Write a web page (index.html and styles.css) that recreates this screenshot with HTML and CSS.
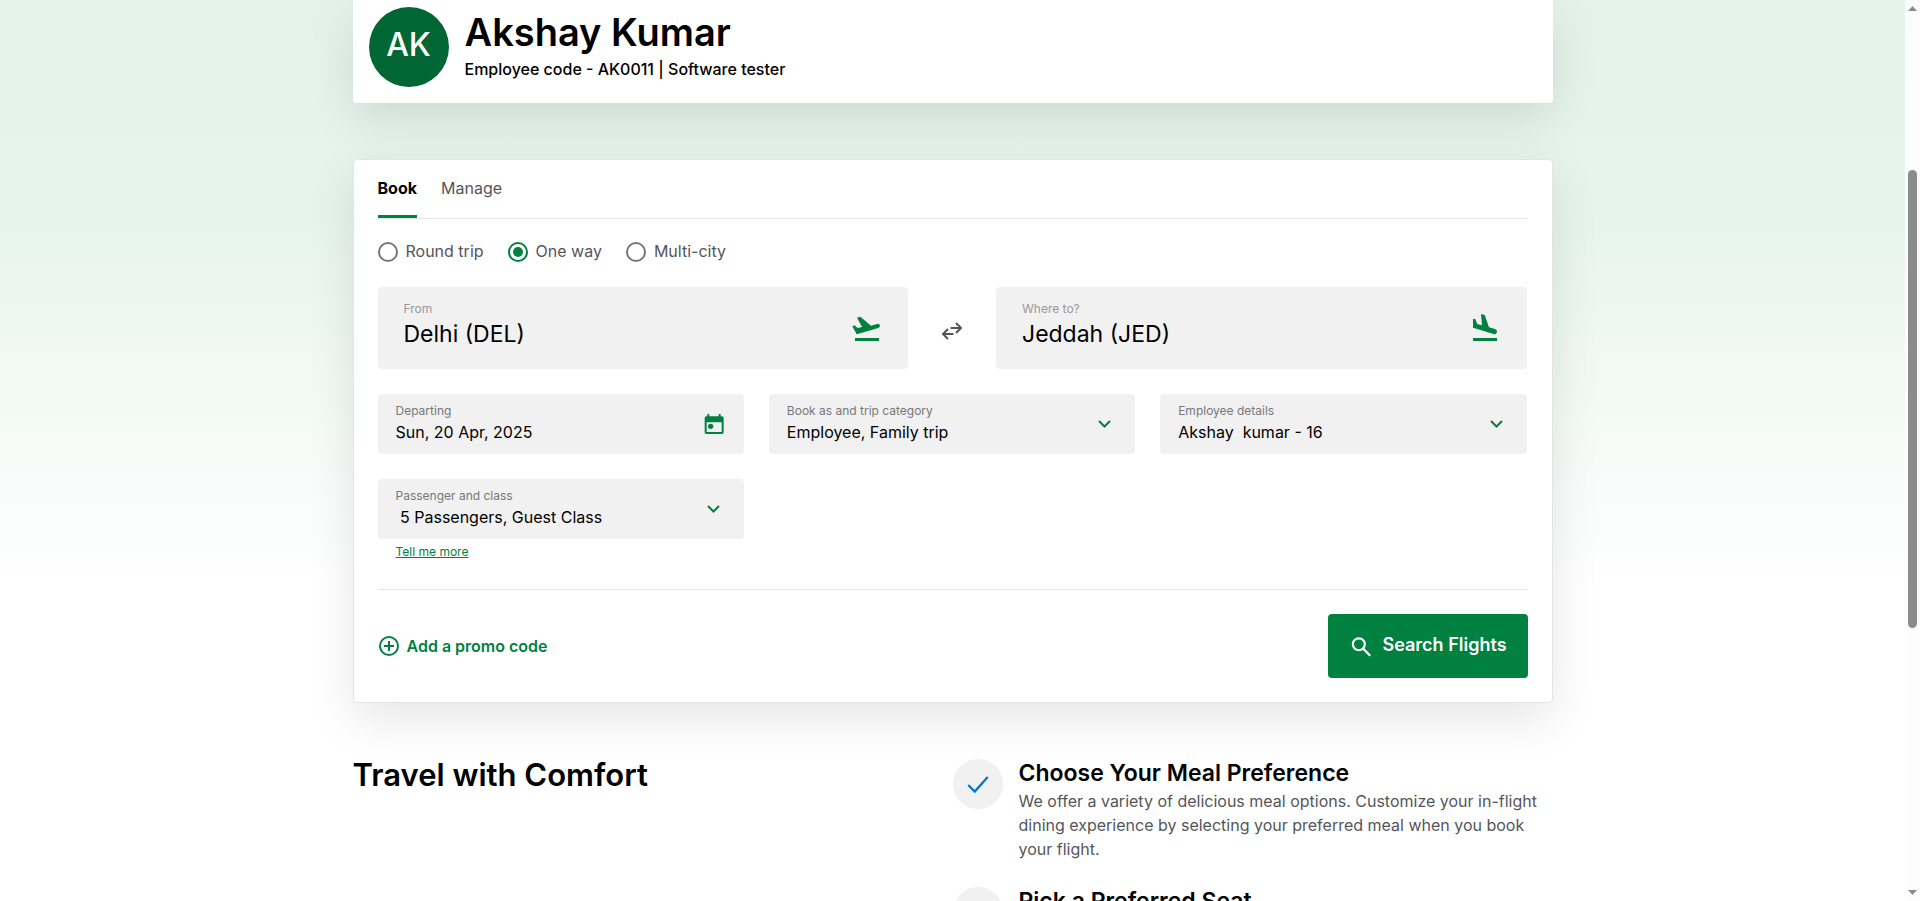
FILE: index.html
```html
<!DOCTYPE html>
<html lang="en">
<head>
<meta charset="utf-8">
<title>Book a flight</title>
<link rel="stylesheet" href="styles.css">
</head>
<body>
<div class="page">
  <main class="content">
    <header class="profile card">
      <div class="avatar">AK</div>
      <div class="profile-text">
        <h1 class="profile-name">Akshay Kumar</h1>
        <p class="profile-meta">Employee code - AK0011 | Software tester</p>
      </div>
    </header>

    <form class="booking card">
      <nav class="tabs">
        <a class="tab tab-active" href="#book">Book</a>
        <a class="tab" href="#manage">Manage</a>
      </nav>

      <div class="trip-types">
        <label class="radio"><input type="radio" name="trip">Round trip</label>
        <label class="radio"><input type="radio" name="trip" checked>One way</label>
        <label class="radio"><input type="radio" name="trip">Multi-city</label>
      </div>

      <div class="route">
        <div class="field field-large">
          <div class="field-body">
            <label for="from">From</label>
            <input id="from" type="text" value="Delhi (DEL)">
          </div>
          <svg class="icon-plane" viewBox="27 36 96 96" aria-hidden="true"><path d="M34 79l6-3 10 8 13-3-15-28 10-3 32 27 18-5q7-1 9 4 1 5-5 8L47 103zM42 114h72v9H42z"/></svg>
        </div>
        <button class="swap" type="button" aria-label="Swap origin and destination">
          <svg viewBox="0 0 24 24" aria-hidden="true"><path d="M3 15h10.500M8 10l-5 5 5 5M10.500 9H21M16 4l5 5-5 5"/></svg>
        </button>
        <div class="field field-large">
          <div class="field-body">
            <label for="to">Where to?</label>
            <input id="to" type="text" value="Jeddah (JED)">
          </div>
          <svg class="icon-plane" viewBox="27 36 96 96" aria-hidden="true"><path d="M39 56l7 2 6 14 14 4-3-34 11 3 13 37 18 5q7 3 6 9-2 7-8 7L39 83zM39 114h72v9H39z"/></svg>
        </div>
      </div>

      <div class="details">
        <div class="field">
          <div class="field-body">
            <label for="date">Departing</label>
            <input id="date" type="text" value="Sun, 20 Apr, 2025">
          </div>
          <svg class="icon-calendar" viewBox="22 24 72 72" aria-hidden="true"><path fill-rule="evenodd" d="M38 30h6v7h28v-7h6v7h4q5 0 5 5v43q0 5-5 5H35q-5 0-5-5V42q0-5 5-5h3zM36 55v29h45V55z"/><circle cx="48" cy="67" r="8"/></svg>
        </div>
        <div class="field">
          <div class="field-body">
            <label for="category">Book as and trip category</label>
            <select id="category"><option>Employee, Family trip</option></select>
          </div>
          <svg class="icon-chevron" viewBox="0 0 16 16" aria-hidden="true"><path d="M2 5l5.500 5.500L13 5"/></svg>
        </div>
        <div class="field">
          <div class="field-body">
            <label for="employee">Employee details</label>
            <select id="employee"><option>Akshay&nbsp; kumar - 16</option></select>
          </div>
          <svg class="icon-chevron" viewBox="0 0 16 16" aria-hidden="true"><path d="M2 5l5.500 5.500L13 5"/></svg>
        </div>
        <div class="passengers">
          <div class="field">
            <div class="field-body">
              <label for="passengers">Passenger and class</label>
              <select id="passengers"><option>&nbsp;5 Passengers, Guest Class</option></select>
            </div>
            <svg class="icon-chevron" viewBox="0 0 16 16" aria-hidden="true"><path d="M2 5l5.500 5.500L13 5"/></svg>
          </div>
          <a class="more" href="#more">Tell me more</a>
        </div>
      </div>

      <div class="actions">
        <button class="promo" type="button">
          <svg viewBox="0 0 22 22" aria-hidden="true"><circle cx="11" cy="11" r="9"/><path d="M11 6v10M6 11h10"/></svg>
          Add a promo code
        </button>
        <button class="search" type="submit">
          <svg viewBox="0 0 24 24" aria-hidden="true"><circle cx="10" cy="9.500" r="5.500"/><path d="M14 13.500l6.500 6.500"/></svg>
          Search Flights
        </button>
      </div>
    </form>

    <section class="comfort">
      <h2 class="comfort-title">Travel with Comfort</h2>
      <ul class="perks">
        <li class="perk">
          <span class="perk-icon"><svg viewBox="0 0 24 24" aria-hidden="true"><path d="M3 13l6 6L21 5.500"/></svg></span>
          <div>
            <h3 class="perk-title">Choose Your Meal Preference</h3>
            <p class="perk-text">We offer a variety of delicious meal options. Customize your in-flight dining experience by selecting your preferred meal when you book your flight.</p>
          </div>
        </li>
        <li class="perk">
          <span class="perk-icon"><svg viewBox="0 0 24 24" aria-hidden="true"><path d="M3 13l6 6L21 5.500"/></svg></span>
          <div>
            <h3 class="perk-title">Pick a Preferred Seat</h3>
          </div>
        </li>
      </ul>
    </section>
  </main>

  <div class="scrollbar" aria-hidden="true">
    <svg class="arrow" viewBox="0 0 9 5"><path d="M0 5L4.500 0 9 5z"/></svg>
    <div class="track"><div class="thumb"></div></div>
    <svg class="arrow" viewBox="0 0 9 5"><path d="M0 0h9L4.500 5z"/></svg>
  </div>
</div>
</body>
</html>
```
FILE: styles.css
```css
* {
  box-sizing: border-box;
}

body {
  margin: 0;
  color: #000;
  font: 400 16px/24px Inter, "Liberation Sans", sans-serif;
}

h1, h2, h3, p, ul {
  margin: 0;
  padding: 0;
}

input, select, button {
  margin: 0;
  padding: 0;
  border: 0;
  background: none;
  color: inherit;
  font: inherit;
}

.page {
  display: flex;
  height: 100vh;
  overflow: hidden;
  background: linear-gradient(#e4f2ea 0, #e6f4ec 210px, #fff 590px);
}

.content {
  flex: 1;
  padding: 0 24px;
}

.card {
  max-width: 1200px;
  margin: 0 auto;
  background: #fff;
  box-shadow: 0 16px 48px rgba(0, 0, 0, 0.1);
}

.profile {
  display: flex;
  gap: 16px;
  padding: 7px 16px 16px;
  border-radius: 0 0 4px 4px;
}

.avatar {
  flex: none;
  width: 80px;
  height: 80px;
  border-radius: 50%;
  background: #006633;
  color: #fff;
  font-size: 32px;
  font-weight: 500;
  line-height: 76px;
  text-align: center;
}

.profile-name {
  font-size: 38px;
  font-weight: 600;
  line-height: 50px;
}

.profile-meta {
  font-weight: 500;
}

.booking {
  margin-top: 56px;
  padding: 0 24px 24px;
  border: 1px solid #e3e4e4;
  border-radius: 4px;
}

.tabs {
  display: flex;
  gap: 24px;
  border-bottom: 1px solid #e3e4e4;
}

.tab {
  padding: 16px 0 15px;
  border-bottom: 3px solid transparent;
  color: #54565a;
  text-decoration: none;
}

.tab-active {
  border-color: #008140;
  color: #000;
  font-weight: 700;
}

.trip-types {
  display: flex;
  gap: 24px;
  margin-top: 20px;
}

.radio {
  display: flex;
  align-items: center;
  gap: 8px;
  color: #54565a;
}

.radio input {
  width: 20px;
  height: 20px;
  margin-top: 2px;
  padding: 3px;
  border: 2px solid #75787b;
  border-radius: 50%;
  appearance: none;
}

.radio input:checked {
  border-color: #008140;
  background: #008140 content-box;
}

.route {
  display: grid;
  grid-template-columns: 1fr 40px 1fr;
  gap: 24px;
  align-items: center;
  margin: 24px 1px 0 0;
}

.field {
  display: flex;
  align-items: center;
  height: 60px;
  padding: 0 18px;
  border-radius: 4px;
  background: #f1f1f1;
}

.field-large {
  height: 82px;
  padding: 0 26px;
}

.field-body {
  flex: 1;
  min-width: 0;
}

.field label {
  display: block;
  padding-bottom: 2px;
  color: #75787b;
  font-size: 12px;
  line-height: 14px;
}

.field input, .field select {
  display: block;
  width: 100%;
  height: 24px;
  appearance: none;
}

.field-large .field-body {
  padding-bottom: 4px;
}

.field-large label {
  color: #97999b;
}

.field-large input {
  height: 32px;
  font-size: 23px;
}

.field svg {
  flex: none;
}

.icon-plane {
  width: 32px;
  height: 32px;
  fill: #008140;
}

.icon-calendar {
  width: 24px;
  height: 24px;
  fill: #008140;
}

.icon-chevron {
  width: 16px;
  height: 16px;
  margin-right: 4px;
  fill: none;
  stroke: #008140;
  stroke-width: 2;
}

.swap {
  display: flex;
  justify-content: center;
  margin-top: 6px;
}

.swap svg {
  width: 24px;
  height: 24px;
  fill: none;
  stroke: #54565a;
  stroke-width: 2;
}

.details {
  display: grid;
  grid-template-columns: repeat(3, 1fr);
  gap: 25px;
  margin: 25px 1px 0 0;
}

.more {
  display: block;
  width: max-content;
  margin: 5px 0 0 18px;
  color: #008140;
  font-size: 12px;
  line-height: 16px;
}

.actions {
  display: flex;
  align-items: center;
  justify-content: space-between;
  margin-top: 29px;
  padding-top: 24px;
  border-top: 1px solid #e3e4e4;
}

.promo {
  display: flex;
  align-items: center;
  gap: 7px;
  color: #008140;
  font-weight: 600;
}

.promo svg {
  width: 22px;
  height: 22px;
  fill: none;
  stroke: #008140;
  stroke-width: 2;
}

.search {
  display: flex;
  align-items: center;
  justify-content: center;
  gap: 8px;
  width: 200px;
  height: 64px;
  padding-bottom: 2px;
  border-radius: 4px;
  background: #008140;
  color: #fff;
  font-size: 18px;
  font-weight: 600;
}

.search svg {
  width: 26px;
  height: 26px;
  margin-top: 4px;
  fill: none;
  stroke: #fff;
  stroke-width: 2;
}

.comfort {
  display: grid;
  grid-template-columns: 1fr 1fr;
  max-width: 1200px;
  margin: 56px auto 0;
}

.comfort-title {
  font-size: 31px;
  font-weight: 600;
  line-height: 32px;
}

.perks {
  display: grid;
  gap: 26px;
  list-style: none;
}

.perk {
  display: flex;
  gap: 16px;
}

.perk-icon {
  display: flex;
  flex: none;
  align-items: center;
  justify-content: center;
  width: 50px;
  height: 50px;
  border-radius: 50%;
  background: #f1f1f1;
}

.perk-icon svg {
  width: 26px;
  height: 26px;
  fill: none;
  stroke: #0077c0;
  stroke-width: 2;
}

.perk-title {
  padding-bottom: 2px;
  font-size: 23px;
  font-weight: 600;
  line-height: 28px;
}

.perk-text {
  color: #54565a;
}

.scrollbar {
  display: flex;
  flex: none;
  flex-direction: column;
  align-items: center;
  gap: 4px;
  width: 15px;
  padding: 6px 0;
  background: #fcfcfc;
}

.arrow {
  width: 9px;
  height: 5px;
  fill: #8b8b8b;
}

.track {
  flex: 1;
  padding-top: 155px;
}

.thumb {
  width: 9px;
  height: 64%;
  border-radius: 5px;
  background: #8b8b8b;
}
```
